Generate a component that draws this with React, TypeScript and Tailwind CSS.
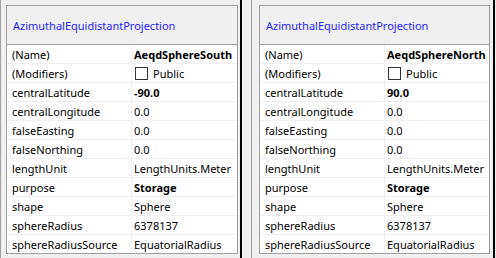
import React from 'react'

interface Row {
  name: string
  value: string
  bold?: boolean
  checkbox?: boolean
}

const rowsFor = (name: string, lat: string): Row[] => [
  { name: '(Name)', value: name, bold: true },
  { name: '(Modifiers)', value: 'Public', checkbox: true },
  { name: 'centralLatitude', value: lat, bold: true },
  { name: 'centralLongitude', value: '0.0' },
  { name: 'falseEasting', value: '0.0' },
  { name: 'falseNorthing', value: '0.0' },
  { name: 'lengthUnit', value: 'LengthUnits.Meter' },
  { name: 'purpose', value: 'Storage', bold: true },
  { name: 'shape', value: 'Sphere' },
  { name: 'sphereRadius', value: '6378137' },
  { name: 'sphereRadiusSource', value: 'EquatorialRadius' },
]

function PropertyGrid({ title, rows }: { title: string; rows: Row[] }) {
  return (
    <div className="flex-1 flex flex-col border-x border-t border-[#a0a0a0] bg-white overflow-hidden">
      {/* header */}
      <div className="h-[38px] shrink-0 flex items-center pl-[6px] bg-[#f0f0f0] text-[#2626ff] border-b border-[#a0a0a0] box-content">
        {title}
      </div>
      {rows.map((r, i) => (
        <div
          key={r.name}
          className={`h-[18px] shrink-0 flex border-b box-content ${
            i === rows.length - 1 ? 'border-[#a0a0a0]' : 'border-[#f0f0f0]'
          }`}
        >
          <div className="w-[119px] shrink-0 pl-[5px] flex items-center border-r border-[#f0f0f0] box-content whitespace-nowrap">
            {r.name}
          </div>
          <div className={`flex-1 pl-[2px] flex items-center whitespace-nowrap overflow-hidden ${r.bold ? 'font-bold' : ''}`}>
            {r.checkbox && (
              <span className="w-[13px] h-[13px] border border-[#333333] bg-white mr-[5px] ml-[1px] shrink-0" />
            )}
            {r.value}
          </div>
        </div>
      ))}
    </div>
  )
}

export default function App() {
  return (
    <div className="w-[496px] h-[258px] bg-[#f0f0f0] flex overflow-hidden text-[11px] leading-none text-black font-['Segoe_UI','Noto_Sans',sans-serif]">
      <div className="w-[242px] shrink-0 flex border-l border-[#a0a0a0] border-r-2 border-r-black pl-[5px] pr-[2px] pt-[5px] pb-[4px]">
        <PropertyGrid title="AzimuthalEquidistantProjection" rows={rowsFor('AeqdSphereSouth', '-90.0')} />
      </div>
      <div className="w-[9px] shrink-0" />
      <div className="w-[244px] shrink-0 flex border-l border-[#a0a0a0] border-r-2 border-r-black pl-[7px] pr-[3px] pt-[5px] pb-[4px]">
        <PropertyGrid title="AzimuthalEquidistantProjection" rows={rowsFor('AeqdSphereNorth', '90.0')} />
      </div>
    </div>
  )
}
